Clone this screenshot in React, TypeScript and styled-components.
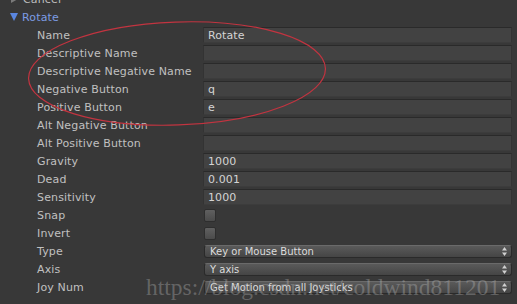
import React from "react";
import styled, { createGlobalStyle } from "styled-components";

type Field =
  | { kind: "text"; label: string; value?: string }
  | { kind: "check"; label: string }
  | { kind: "popup"; label: string; value: string };

const fields: Field[] = [
  { kind: "text", label: "Name", value: "Rotate" },
  { kind: "text", label: "Descriptive Name" },
  { kind: "text", label: "Descriptive Negative Name" },
  { kind: "text", label: "Negative Button", value: "q" },
  { kind: "text", label: "Positive Button", value: "e" },
  { kind: "text", label: "Alt Negative Button" },
  { kind: "text", label: "Alt Positive Button" },
  { kind: "text", label: "Gravity", value: "1000" },
  { kind: "text", label: "Dead", value: "0.001" },
  { kind: "text", label: "Sensitivity", value: "1000" },
  { kind: "check", label: "Snap" },
  { kind: "check", label: "Invert" },
  { kind: "popup", label: "Type", value: "Key or Mouse Button" },
  { kind: "popup", label: "Axis", value: "Y axis" },
  { kind: "popup", label: "Joy Num", value: "Get Motion from all Joysticks" },
];

function App() {
  return (
    <>
      <GlobalStyle />
      <Panel>
        <List>
          <Foldout>
            <Arrow $open={false} />
            <FoldoutTitle $active={false}>Cancel</FoldoutTitle>
          </Foldout>
          <Foldout>
            <Arrow $open />
            <FoldoutTitle $active>Rotate</FoldoutTitle>
          </Foldout>
          {fields.map((f) => (
            <Row key={f.label}>
              <Label>{f.label}</Label>
              {f.kind === "text" && <TextField>{f.value}</TextField>}
              {f.kind === "check" && <Check />}
              {f.kind === "popup" && (
                <Popup>
                  <span>{f.value}</span>
                  <Spinner viewBox="0 0 5 9">
                    <path d="M2.5 0 L5 3.4 L0 3.4 Z M2.5 9 L5 5.6 L0 5.6 Z" />
                  </Spinner>
                </Popup>
              )}
            </Row>
          ))}
        </List>

        {/* hand drawn mark round the name fields */}
        <Mark viewBox="0 0 517 304">
          <ellipse
            cx="177"
            cy="73.5"
            rx="148.5"
            ry="51.5"
            transform="rotate(-2 177 73.5)"
          />
        </Mark>
        <Watermark>https://blog.csdn.net/coldwind811201</Watermark>
      </Panel>
    </>
  );
}

const GlobalStyle = createGlobalStyle`
  html, body {
    margin: 0;
    background: #383838;
    overflow: hidden;
  }
`;

const Panel = styled.div`
  position: relative;
  width: 517px;
  height: 304px;
  overflow: hidden;
  background: #383838;
  font-family: "DejaVu Sans", "Noto Sans", sans-serif;
  font-size: 11px;
`;

const List = styled.div`
  display: flex;
  flex-direction: column;
  margin-top: -10px;
`;

const Foldout = styled.div`
  display: flex;
  align-items: center;
  height: 18px;
  padding-left: 10px;
  letter-spacing: 0.15px;
`;

const Arrow = styled.span<{ $open: boolean }>`
  width: 0;
  height: 0;
  margin-right: 4px;
  ${(p) =>
    p.$open
      ? `
    border-left: 4.5px solid transparent;
    border-right: 4.5px solid transparent;
    border-top: 8px solid #5a86e0;
  `
      : `
    margin-left: 1px;
    border-top: 4px solid transparent;
    border-bottom: 4px solid transparent;
    border-left: 7px solid #7a7a7a;
    margin-right: 5px;
  `}
`;

const FoldoutTitle = styled.span<{ $active: boolean }>`
  color: ${(p) => (p.$active ? "#7c9ce4" : "#bdbdbd")};
`;

const Row = styled.div`
  display: grid;
  grid-template-columns: 203px 1fr;
  align-items: center;
  height: 18px;
  padding-right: 5px;
`;

const Label = styled.span`
  padding-left: 37px;
  color: #c0c0c0;
  letter-spacing: 0.15px;
  white-space: nowrap;
`;

const TextField = styled.div`
  height: 16px;
  box-sizing: border-box;
  display: flex;
  align-items: center;
  padding: 0 4px;
  background: #424242;
  border-top: 1px solid #2a2a2a;
  border-left: 1px solid #333;
  border-right: 1px solid #333;
  border-bottom: 1px solid #3c3c3c;
  color: #d4d4d4;
  letter-spacing: 0.1px;
`;

const Check = styled.div`
  width: 12px;
  height: 13px;
  margin-left: 1px;
  box-sizing: border-box;
  border-radius: 2px;
  border: 1px solid #2e2e2e;
  background: linear-gradient(#606060, #4b4b4b);
`;

const Popup = styled.div`
  height: 13px;
  margin-left: 1px;
  box-sizing: border-box;
  display: flex;
  align-items: center;
  justify-content: space-between;
  padding: 0 4px 0 5px;
  border-radius: 3px;
  border: 1px solid #2a2a2a;
  border-top-color: #6a6a6a;
  background: linear-gradient(#5a5a5a, #454545);
  color: #dcdcdc;
  font-size: 10px;
  white-space: nowrap;
`;

const Spinner = styled.svg`
  width: 5px;
  height: 9px;
  fill: #d0d0d0;
`;

const Mark = styled.svg`
  position: absolute;
  left: 0;
  top: 0;
  width: 517px;
  height: 304px;
  pointer-events: none;
  fill: none;
  stroke: #c23440;
  stroke-width: 1.2;
`;

const Watermark = styled.div`
  position: absolute;
  left: 146px;
  top: 274px;
  font-family: "Liberation Serif", "DejaVu Serif", serif;
  font-size: 23.5px;
  line-height: 26px;
  color: rgba(175, 175, 175, 0.4);
  white-space: nowrap;
  pointer-events: none;
`;

export default App;
